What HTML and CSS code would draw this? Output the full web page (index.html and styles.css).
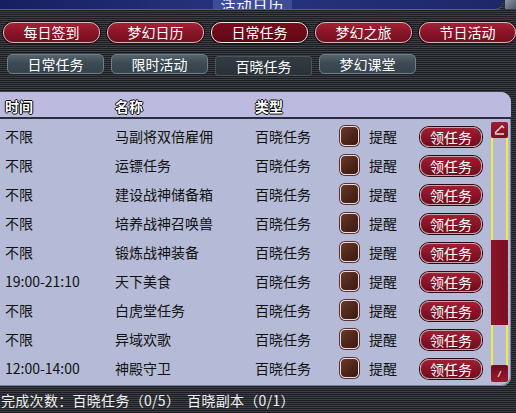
FILE: index.html
```html
<!DOCTYPE html>
<html lang="zh-CN">
<head>
    <meta charset="UTF-8">
    <title>活动日历</title>
    <link rel="stylesheet" href="styles.css">
</head>
<body>
    <div class="titlebar">
        <div class="title"><span>活动日历</span></div>
        <div class="close"></div>
    </div>

    <div class="nav">
        <div class="red-btn">每日签到</div>
        <div class="red-btn">梦幻日历</div>
        <div class="red-btn active">日常任务</div>
        <div class="red-btn">梦幻之旅</div>
        <div class="red-btn">节日活动</div>
    </div>

    <div class="tabs">
        <div class="tab">日常任务</div>
        <div class="tab">限时活动</div>
        <div class="tab active">百晓任务</div>
        <div class="tab">梦幻课堂</div>
    </div>

    <div class="panel">
        <div class="panel-head">
            <span>时间</span>
            <span>名称</span>
            <span>类型</span>
        </div>
        <div class="panel-body">
            <div class="rows">
                <div class="row"><span>不限</span><span>马副将双倍雇佣</span><span>百晓任务</span><i class="check"></i><span>提醒</span><b class="take">领任务</b></div>
                <div class="row"><span>不限</span><span>运镖任务</span><span>百晓任务</span><i class="check"></i><span>提醒</span><b class="take">领任务</b></div>
                <div class="row"><span>不限</span><span>建设战神储备箱</span><span>百晓任务</span><i class="check"></i><span>提醒</span><b class="take">领任务</b></div>
                <div class="row"><span>不限</span><span>培养战神召唤兽</span><span>百晓任务</span><i class="check"></i><span>提醒</span><b class="take">领任务</b></div>
                <div class="row"><span>不限</span><span>锻炼战神装备</span><span>百晓任务</span><i class="check"></i><span>提醒</span><b class="take">领任务</b></div>
                <div class="row"><span>19:00-21:10</span><span>天下美食</span><span>百晓任务</span><i class="check"></i><span>提醒</span><b class="take">领任务</b></div>
                <div class="row"><span>不限</span><span>白虎堂任务</span><span>百晓任务</span><i class="check"></i><span>提醒</span><b class="take">领任务</b></div>
                <div class="row"><span>不限</span><span>异域欢歌</span><span>百晓任务</span><i class="check"></i><span>提醒</span><b class="take">领任务</b></div>
                <div class="row"><span>12:00-14:00</span><span>神殿守卫</span><span>百晓任务</span><i class="check"></i><span>提醒</span><b class="take">领任务</b></div>
            </div>
            <div class="scroll">
                <div class="arrow">
                    <svg width="15" height="15" viewBox="0 0 15 15"><path d="M3 10 L10 3 L12 5 M3 11 H12" stroke="#f0d8dc" stroke-width="1.5" fill="none"/></svg>
                </div>
                <div class="track">
                    <div class="thumb"></div>
                </div>
                <div class="arrow down">
                    <svg width="15" height="15" viewBox="0 0 15 15"><path d="M9 5 L6 11" stroke="#d8a8b0" stroke-width="1.5" fill="none"/></svg>
                </div>
            </div>
        </div>
    </div>

    <div class="footer">完成次数：百晓任务（0/5）  百晓副本（0/1）</div>
</body>
</html>
```

FILE: styles.css
```css
body {
    margin: 0;
    width: 516px;
    height: 413px;
    overflow: hidden;
    font-family: "Noto Sans CJK SC", sans-serif;
    font-size: 14px;
    color: #111;
    background: repeating-linear-gradient(#1b1d21 0 1px, #3c4046 1px 2px);
}
.titlebar {
    display: flex;
    height: 10px;
}
.title {
    width: 503px;
    height: 9px;
    border-bottom: 1px solid #5c6474;
    border-radius: 0 0 8px 0;
    background: linear-gradient(90deg, #142060, #25317a 40%, #25317a 60%, #1c2868);
    display: flex;
    justify-content: center;
    overflow: hidden;
}
.title span {
    width: 79px;
    margin-left: 2px;
    height: 9px;
    line-height: 9px;
    background: #3e4c9c;
    color: #fff;
    font-size: 15px;
    display: flex;
    justify-content: center;
    align-items: flex-end;
    letter-spacing: 1px;
}
.close {
    width: 11px;
    height: 9px;
    margin-left: 2px;
    background: linear-gradient(135deg, #8a96a8, #4e5868);
}
.nav {
    display: flex;
    gap: 7px;
    padding-left: 3px;
    margin-top: 12px;
}
.red-btn {
    width: 95px;
    height: 19px;
    line-height: 19px;
    text-align: center;
    color: #fff;
    border: 1px solid #d8b8bc;
    border-radius: 10px;
    background: linear-gradient(#a42236, #8a1428 50%, #72101f);
    box-shadow: 0 0 0 1px #2a0a10;
}
.red-btn.active {
    background: linear-gradient(#7a0c1c, #5e0814);
    border-color: #f0e4e6;
}
.tabs {
    display: flex;
    gap: 7px;
    padding-left: 7px;
    margin-top: 11px;
}
.tab {
    width: 95px;
    height: 18px;
    line-height: 18px;
    text-align: center;
    color: #fff;
    border: 1px solid #707c86;
    border-radius: 5px;
    background: linear-gradient(#55646e, #3c4a54 45%, #36424c);
}
.tab.active {
    margin-top: 2px;
    border-color: #4a545c;
    border-radius: 3px;
    background: linear-gradient(#323c44, #2a3238);
}
.panel {
    width: 511px;
    margin-top: 16px;
    border-radius: 0 10px 9px 0;
    background: #b5bbd6;
    box-shadow: inset -1px -1px 0 #7c82a0;
    overflow: hidden;
}
.panel-head {
    display: grid;
    grid-template-columns: 110px 140px 85px;
    height: 23px;
    padding: 2px 0 0 5px;
    align-items: center;
    background: #bcbade;
    border-bottom: 2px solid #2c2c40;
    color: #fff;
    font-weight: bold;
    text-shadow: 1px 0 0 #000, -1px 0 0 #000, 0 1px 0 #000, 0 -1px 0 #000;
}
.panel-body {
    display: flex;
    padding: 2px 0 4px 0;
}
.rows {
    width: 490px;
}
.row {
    display: grid;
    grid-template-columns: 110px 140px 85px 29px 51px 62px;
    height: 29px;
    padding-left: 5px;
    align-items: center;
}
.check {
    display: block;
    width: 17px;
    height: 18px;
    border: 1px solid #e8dcdc;
    border-radius: 5px;
    background: linear-gradient(135deg, #6a3a2c, #4a2418 60%, #3c1c12);
    box-shadow: 0 0 0 1px #5a3038;
}
.take {
    display: block;
    width: 60px;
    height: 18px;
    line-height: 18px;
    margin-top: 3px;
    text-align: center;
    font-weight: normal;
    color: #fff;
    border: 1px solid #c8a0a8;
    border-radius: 9px;
    background: linear-gradient(#a01e32, #8a1428 50%, #6c0e1c);
    box-shadow: 0 0 0 1px #2a0a10;
}
.scroll {
    width: 17px;
    margin-top: 1px;
    margin-left: 1px;
    display: flex;
    flex-direction: column;
}
.arrow {
    height: 16px;
    display: flex;
    align-items: center;
    justify-content: center;
    background: linear-gradient(#a01e34, #7c1022);
    border-radius: 2px;
}
.arrow.down {
    height: 17px;
    background: linear-gradient(#6a0c1a, #9a1c30);
}
.track {
    height: 227px;
    border-left: 2px solid #eeee3c;
    border-right: 2px solid #eeee3c;
    padding-top: 102px;
    box-sizing: border-box;
}
.thumb {
    height: 85px;
    margin: 0 -2px;
    background: linear-gradient(90deg, #8a1428, #7a1020);
}
.footer {
    margin-top: 6px;
    padding-left: 1px;
    color: #f0f0f0;
    line-height: 16px;
    letter-spacing: 0.3px;
    white-space: pre;
}
```
